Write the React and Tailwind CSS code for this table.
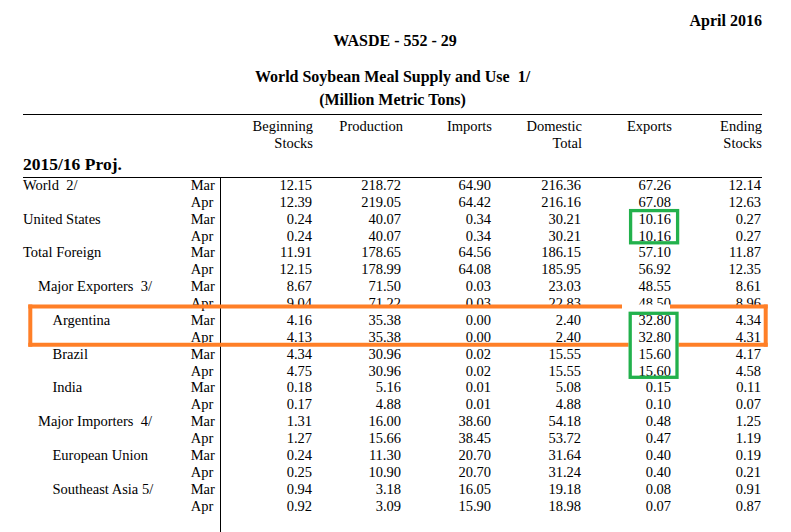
import React from 'react'

// WASDE soybean meal table — Mar vs Apr estimates
const COLUMNS = [
  ['Beginning', 'Stocks'],
  ['Production'],
  ['Imports'],
  ['Domestic', 'Total'],
  ['Exports'],
  ['Ending', 'Stocks'],
]

const ROWS = [
  { label: 'World  2/', indent: 0, mar: ['12.15', '218.72', '64.90', '216.36', '67.26', '12.14'], apr: ['12.39', '219.05', '64.42', '216.16', '67.08', '12.63'] },
  { label: 'United States', indent: 0, mar: ['0.24', '40.07', '0.34', '30.21', '10.16', '0.27'], apr: ['0.24', '40.07', '0.34', '30.21', '10.16', '0.27'] },
  { label: 'Total Foreign', indent: 0, mar: ['11.91', '178.65', '64.56', '186.15', '57.10', '11.87'], apr: ['12.15', '178.99', '64.08', '185.95', '56.92', '12.35'] },
  { label: 'Major Exporters  3/', indent: 1, mar: ['8.67', '71.50', '0.03', '23.03', '48.55', '8.61'], apr: ['9.04', '71.22', '0.03', '22.83', '48.50', '8.96'] },
  { label: 'Argentina', indent: 2, mar: ['4.16', '35.38', '0.00', '2.40', '32.80', '4.34'], apr: ['4.13', '35.38', '0.00', '2.40', '32.80', '4.31'] },
  { label: 'Brazil', indent: 2, mar: ['4.34', '30.96', '0.02', '15.55', '15.60', '4.17'], apr: ['4.75', '30.96', '0.02', '15.55', '15.60', '4.58'] },
  { label: 'India', indent: 2, mar: ['0.18', '5.16', '0.01', '5.08', '0.15', '0.11'], apr: ['0.17', '4.88', '0.01', '4.88', '0.10', '0.07'] },
  { label: 'Major Importers  4/', indent: 1, mar: ['1.31', '16.00', '38.60', '54.18', '0.48', '1.25'], apr: ['1.27', '15.66', '38.45', '53.72', '0.47', '1.19'] },
  { label: 'European Union', indent: 2, mar: ['0.24', '11.30', '20.70', '31.64', '0.40', '0.19'], apr: ['0.25', '10.90', '20.70', '31.24', '0.40', '0.21'] },
  { label: 'Southeast Asia 5/', indent: 2, mar: ['0.94', '3.18', '16.05', '19.18', '0.08', '0.91'], apr: ['0.92', '3.09', '15.90', '18.98', '0.07', '0.87'] },
]

const INDENT = ['pl-0', 'pl-[15px]', 'pl-[29.5px]']

function NumberRow({ values }) {
  return (
    <div className="grid grid-cols-[92px_89px_90px_90px_90px_90px] h-[16.88px] leading-[16.88px]">
      {values.map((v, i) => (
        <div key={i} className="text-right pr-[1px]">{v}</div>
      ))}
    </div>
  )
}

// paint-style markup drawn over the scan
function Annotations() {
  const orange = '#ff7f27'
  const green = '#22b14c'
  return (
    <svg className="absolute left-0 top-0 pointer-events-none" width="791" height="532" viewBox="0 0 791 532">
      <rect x="622" y="304.5" width="48" height="4" fill="#ffffff" />
      <line x1="28.3" y1="306.5" x2="622" y2="306.5" stroke={orange} strokeWidth="4" />
      <line x1="670" y1="306.5" x2="767.7" y2="306.5" stroke={orange} strokeWidth="4" />
      <line x1="28.3" y1="344.7" x2="628.5" y2="344.7" stroke={orange} strokeWidth="4" />
      <line x1="678.5" y1="344.7" x2="767.7" y2="344.7" stroke={orange} strokeWidth="4" />
      <line x1="30.3" y1="304.5" x2="30.3" y2="346.7" stroke={orange} strokeWidth="4" />
      <line x1="765.7" y1="304.5" x2="765.7" y2="346.7" stroke={orange} strokeWidth="4" />
      <rect x="630.6" y="210.6" width="47" height="32.2" fill="none" stroke={green} strokeWidth="3.3" />
      <rect x="630.2" y="313.3" width="46.8" height="64" fill="none" stroke={green} strokeWidth="3.3" />
    </svg>
  )
}

export default function App() {
  return (
    <div className="relative w-[791px] h-[532px] overflow-hidden bg-white text-black font-['Liberation_Serif',serif] text-[14.5px]">
      <div className="ml-[23px] w-[739px] pt-[11px]">
        {/* Report heading */}
        <div className="h-[20px] leading-[20px] text-[16px] font-bold text-right">April 2016</div>
        <div className="h-[20px] leading-[20px] text-[16px] font-bold text-center pl-[5px]">WASDE - 552 - 29</div>
        <div className="mt-[14px] leading-[23px] text-[16px] font-bold text-center">
          <div className="whitespace-pre">World Soybean Meal Supply and Use  1/</div>
          <div>(Million Metric Tons)</div>
        </div>

        <div className="mt-[3px] border-t border-black" />

        {/* Column headings */}
        <div className="flex pt-[3.4px]">
          <div className="w-[198px]" />
          <div className="grid grid-cols-[92px_89px_90px_90px_90px_90px] leading-[16.88px]">
            {COLUMNS.map((lines, i) => (
              <div key={i} className={`text-right ${i === 1 ? '-mr-[1px]' : ''}`}>
                {lines.map((l) => (
                  <div key={l}>{l}</div>
                ))}
              </div>
            ))}
          </div>
        </div>

        <div className="mt-[2.2px] h-[20px] leading-[20px] text-[17.5px] font-bold">2015/16 Proj.</div>

        <div className="mt-[2.6px] border-t border-black" />

        {/* Table body */}
        <div className="flex h-[360px] -mt-[1px]">
          <div className="w-[198px]">
            {ROWS.map((r) => (
              <React.Fragment key={r.label}>
                <div className="grid grid-cols-[167px_31px] h-[16.88px] leading-[16.88px]">
                  <div className={`whitespace-pre ${INDENT[r.indent]}`}>{r.label}</div>
                  <div className="pl-[0.7px]">Mar</div>
                </div>
                <div className="grid grid-cols-[167px_31px] h-[16.88px] leading-[16.88px]">
                  <div />
                  <div className="pl-[0.7px]">Apr</div>
                </div>
              </React.Fragment>
            ))}
          </div>
          <div className="border-l border-black -ml-[1px]">
            {ROWS.map((r) => (
              <React.Fragment key={r.label}>
                <NumberRow values={r.mar} />
                <NumberRow values={r.apr} />
              </React.Fragment>
            ))}
          </div>
        </div>
      </div>

      <Annotations />
    </div>
  )
}
